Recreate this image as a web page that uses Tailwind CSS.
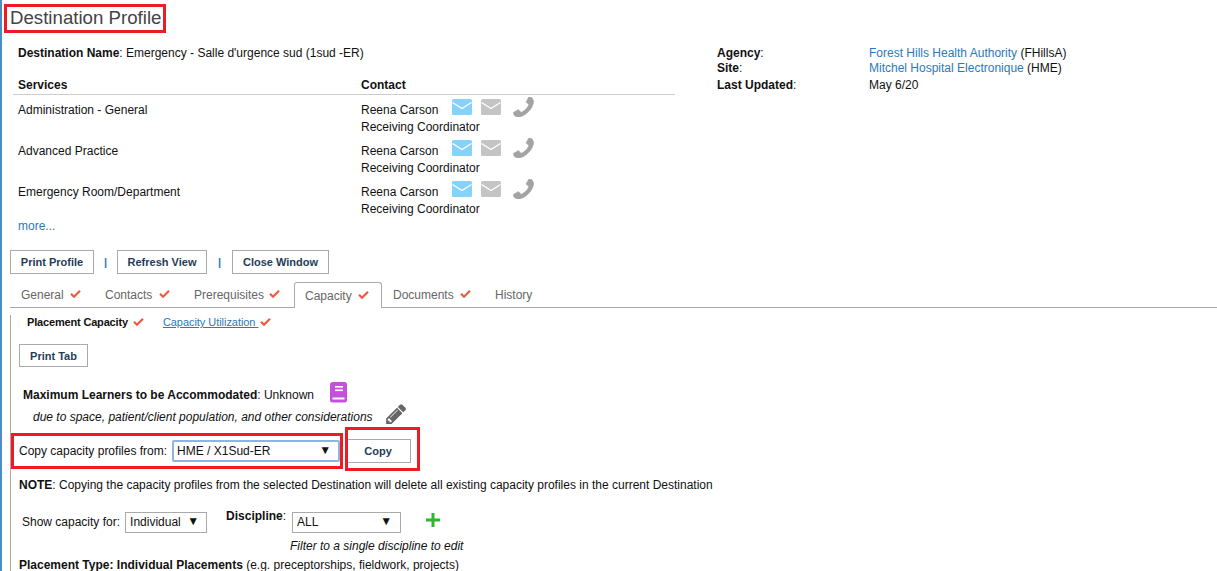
<!DOCTYPE html>
<html lang="en">
<head>
<meta charset="utf-8">
<title>Destination Profile</title>
<script src="https://cdn.jsdelivr.net/npm/@tailwindcss/browser@4"></script>
</head>
<body class="bg-white">
<svg class="hidden">
  <symbol id="mail" viewBox="0 0 20 16"><rect width="20" height="16" rx="1.5" fill="currentColor"/><path d="M0.5 3.5 L10 9.5 L19.5 3.5" fill="none" stroke="#fff" stroke-width="1.3"/></symbol>
  <symbol id="phone" viewBox="0 0 1408 1408"><g transform="translate(1408 0) scale(-1 1)"><path fill="currentColor" stroke="currentColor" stroke-width="50" d="M1408 1112q0 27-10 70.5t-21 68.5q-21 50-122 106-94 51-186 51-27 0-53-3.5t-57.5-12.5-47-14.5-55.5-20.5-49-18q-98-35-175-83-127-79-264-216t-216-264q-48-77-83-175-3-9-18-49t-20.5-55.5-14.5-47-12.5-57.5-3.5-53q0-92 51-186 56-101 106-122 25-11 68.5-21t70.5-10q14 0 21 3 18 6 53 76 11 19 30 54t35 63.5 31 53.5q3 4 17.5 25t21.5 35.5 7 28.5q0 20-28.5 50t-62 55-62 53-28.5 46q0 9 5 22.5t8.5 20.5 14 24 11.5 19q76 137 174 235t235 174q2 1 19 11.5t24 14 20.5 8.5 22.5 5q18 0 46-28.5t53-62 55-62 50-28.5q14 0 28.5 7t35.5 21.5 25 17.5q25 15 53.5 31t63.5 35 54 30q70 35 76 53 3 7 3 21z"/></g></symbol>
  <symbol id="check" viewBox="0 0 11 9"><path d="M1 3.8 L4 6.8 L10 0.8" fill="none" stroke="currentColor" stroke-width="2.2"/></symbol>
</svg>
<div class="relative h-[571px] w-[1217px] overflow-hidden border-l-2 border-[#4a8cc4] font-['Liberation_Sans',Arial,sans-serif] text-[12px] leading-[15px] text-[#111]">

  <h1 class="ml-[8px] pt-[7px] text-[18.67px] leading-[21px] font-normal text-[#444]">Destination Profile</h1>

  <div class="flex mt-[18px] h-[204px]">
    <div class="w-[673px] shrink-0">
      <p class="ml-[16px]"><b>Destination Name</b>: Emergency - Salle d'urgence sud (1sud -ER)</p>
      <div class="ml-[11px] mt-[17px] flex h-[17px] border-b border-[#ccc] pl-[5px] font-bold">
        <span class="w-[343px]">Services</span><span>Contact</span>
      </div>
      <div class="ml-[16px] flex h-[41px] pt-[8px]">
        <span class="w-[343px]">Administration - General</span>
        <div>
          <div class="flex items-start"><span>Reena Carson</span>
            <svg class="ml-[14px] -mt-[4px] h-[16px] w-[20px] text-[#85d2fb]"><use href="#mail"/></svg>
            <svg class="ml-[9px] -mt-[4px] h-[16px] w-[20px] text-[#c4c4c4]"><use href="#mail"/></svg>
            <svg class="ml-[12px] -mt-[6px] h-[20px] w-[21px] text-[#a3a3a3]"><use href="#phone"/></svg>
          </div>
          <div class="mt-[2px]">Receiving Coordinator</div>
        </div>
      </div>
      <div class="ml-[16px] flex h-[41px] pt-[8px]">
        <span class="w-[343px]">Advanced Practice</span>
        <div>
          <div class="flex items-start"><span>Reena Carson</span>
            <svg class="ml-[14px] -mt-[4px] h-[16px] w-[20px] text-[#85d2fb]"><use href="#mail"/></svg>
            <svg class="ml-[9px] -mt-[4px] h-[16px] w-[20px] text-[#c4c4c4]"><use href="#mail"/></svg>
            <svg class="ml-[12px] -mt-[6px] h-[20px] w-[21px] text-[#a3a3a3]"><use href="#phone"/></svg>
          </div>
          <div class="mt-[2px]">Receiving Coordinator</div>
        </div>
      </div>
      <div class="ml-[16px] flex h-[41px] pt-[8px]">
        <span class="w-[343px]">Emergency Room/Department</span>
        <div>
          <div class="flex items-start"><span>Reena Carson</span>
            <svg class="ml-[14px] -mt-[4px] h-[16px] w-[20px] text-[#85d2fb]"><use href="#mail"/></svg>
            <svg class="ml-[9px] -mt-[4px] h-[16px] w-[20px] text-[#c4c4c4]"><use href="#mail"/></svg>
            <svg class="ml-[12px] -mt-[6px] h-[20px] w-[21px] text-[#a3a3a3]"><use href="#phone"/></svg>
          </div>
          <div class="mt-[2px]">Receiving Coordinator</div>
        </div>
      </div>
      <a class="ml-[16px] mt-[1px] block text-[#2a7ab8]">more...</a>
    </div>
    <div class="ml-[42px] grid grid-cols-[152px_1fr] auto-rows-[15px] content-start">
      <b class="font-bold">Agency<span class="font-normal">:</span></b><span><a class="text-[#2a7ab8]">Forest Hills Health Authority</a> (FHillsA)</span>
      <b class="font-bold">Site<span class="font-normal">:</span></b><span><a class="text-[#2a7ab8]">Mitchel Hospital Electronique</a> (HME)</span>
      <b class="mt-[2px] font-bold">Last Updated<span class="font-normal">:</span></b><span class="mt-[2px]">May 6/20</span>
    </div>
  </div>

  <div class="ml-[8px] flex h-[24px] items-center text-[11px] font-bold text-[#1f3d57]">
    <button class="h-[24px] w-[84px] border border-[#aaa]">Print Profile</button>
    <span class="w-[23px] text-center font-bold text-[#2a7ab8]">|</span>
    <button class="h-[24px] w-[90px] border border-[#aaa]">Refresh View</button>
    <span class="w-[25px] text-center font-bold text-[#2a7ab8]">|</span>
    <button class="h-[24px] w-[97px] border border-[#aaa]">Close Window</button>
  </div>

  <div class="ml-[8px] mt-[8px] flex h-[26px] border-b border-[#aaa] text-[#666]">
    <div class="flex items-center pl-[11px] pt-px w-[84px]">General<svg class="ml-[6px] -mt-px h-[9px] w-[11px] text-[#ee5a3f]"><use href="#check"/></svg></div>
    <div class="flex items-center pl-[11px] pt-px w-[89px]">Contacts<svg class="ml-[7px] -mt-px h-[9px] w-[11px] text-[#ee5a3f]"><use href="#check"/></svg></div>
    <div class="flex items-center pl-[11px] pt-px w-[111px]">Prerequisites<svg class="ml-[5px] -mt-px h-[9px] w-[11px] text-[#ee5a3f]"><use href="#check"/></svg></div>
    <div class="-mb-px flex w-[88px] items-center rounded-t-[3px] border border-b-0 border-[#aaa] bg-white pl-[10px] pt-px">Capacity<svg class="ml-[6px] -mt-px h-[9px] w-[11px] text-[#ee5a3f]"><use href="#check"/></svg></div>
    <div class="flex items-center pl-[11px] pt-px w-[102px]">Documents<svg class="ml-[6px] -mt-px h-[9px] w-[11px] text-[#ee5a3f]"><use href="#check"/></svg></div>
    <div class="flex items-center pl-[11px] pt-px">History</div>
  </div>

  <div class="ml-[8px] border-l border-[#aaa] pl-[8px] h-[264px]">
    <div class="mt-[7px] flex h-[15px] items-center text-[11px]">
      <b class="ml-[8px] font-bold tracking-[-0.17px]">Placement Capacity</b><svg class="ml-[5px] -mt-px h-[9px] w-[11px] text-[#ee5a3f]"><use href="#check"/></svg>
      <a class="ml-[19px] text-[#2a7ab8] underline tracking-[-0.05px]">Capacity Utilization&nbsp;</a><svg class="ml-[2px] -mt-px h-[9px] w-[11px] text-[#ee5a3f]"><use href="#check"/></svg>
    </div>
    <button class="mt-[14px] block h-[23px] w-[69px] border border-[#aaa] pt-px text-[11px] font-bold text-[#1f3d57]">Print Tab</button>

    <div class="ml-[4px] mt-[17px] flex h-[22px] items-center">
      <span><b>Maximum Learners to be Accommodated</b>: Unknown</span>
      <svg class="ml-[16px] -mt-[5px] h-[21px] w-[18px]" viewBox="0 0 18 21"><rect width="17" height="20.5" rx="2.5" fill="#c452d8"/><rect x="5" y="4" width="8" height="1.6" fill="#fff"/><rect x="5" y="7.5" width="8" height="1.6" fill="#fff"/><rect x="2.5" y="15.5" width="12" height="2" fill="#fff"/></svg>
    </div>
    <div class="ml-[14px] flex h-[22px] items-center italic">
      <span>due to space, patient/client population, and other considerations</span>
      <svg class="ml-[13px] -mt-[6px] h-[20px] w-[20px] text-[#666]" viewBox="0 0 1515 1536"><path fill="currentColor" d="M363 1408l91-91-235-235-91 91v107h128v128h107zm523-928q0-22-22-22-10 0-17 7l-542 542q-7 7-7 17 0 22 22 22 10 0 17-7l542-542q7-7 7-17zm-54-192l416 416-832 832h-416v-416zm683 96q0 53-37 90l-166 166-416-416 166-165q36-38 90-38 53 0 91 38l235 234q37 39 37 91z"/></svg>
    </div>

    <div class="mt-[12px] flex h-[22px] items-center">
      <span>Copy capacity profiles from:</span>
      <div class="relative ml-[5px] h-[22px] w-[168px]">
        <select class="h-full w-full appearance-none rounded-[2px] border-2 border-[#8fb4e3] bg-white pl-[3px] outline-none"><option>HME / X1Sud-ER</option></select>
        <span class="pointer-events-none absolute right-[9px] top-[3px] text-[12px]">▼</span>
      </div>
      <button class="ml-[5px] h-[24px] w-[66px] shrink-0 border border-[#aaa] text-[11px] font-bold text-[#1f3d57]">Copy</button>
    </div>

    <p class="mt-[16px]"><b>NOTE</b>: Copying the capacity profiles from the selected Destination will delete all existing capacity profiles in the current Destination</p>

    <div class="mt-[19px] flex h-[21px] items-center">
      <span class="ml-[3px]">Show capacity for:</span>
      <div class="relative ml-[5px] h-[21px] w-[82px]">
        <select class="h-full w-full appearance-none border border-[#aaa] bg-white pl-[4px]"><option>Individual</option></select>
        <span class="pointer-events-none absolute right-[8px] top-[2px] text-[12px]">▼</span>
      </div>
      <b class="ml-[19px] -mt-[12px]">Discipline</b><span class="-mt-[12px]">:</span>
      <div class="relative ml-[6px] h-[21px] w-[109px]">
        <select class="h-full w-full appearance-none border border-[#aaa] bg-white pl-[4px]"><option>ALL</option></select>
        <span class="pointer-events-none absolute right-[9px] top-[2px] text-[12px]">▼</span>
      </div>
      <svg class="ml-[25px] -mt-[5px] h-[14px] w-[14px]" viewBox="0 0 14 14"><path d="M7 0V14M0 7H14" stroke="#2fb52f" stroke-width="3"/></svg>
    </div>
    <p class="ml-[271px] mt-[6px] italic">Filter to a single discipline to edit</p>
    <p class="mt-[4px]"><b>Placement Type: Individual Placements</b> (e.g. preceptorships, fieldwork, projects)</p>
  </div>

  <div class="absolute left-[2px] top-[4px] h-[29px] w-[162px] border-[3px] border-[#ed1c24]"></div>
  <div class="absolute left-[9px] top-[433px] h-[36px] w-[332px] border-[3px] border-[#ed1c24]"></div>
  <div class="absolute left-[343px] top-[427px] h-[44px] w-[75px] border-[3px] border-[#ed1c24]"></div>
</div>
</body>
</html>
